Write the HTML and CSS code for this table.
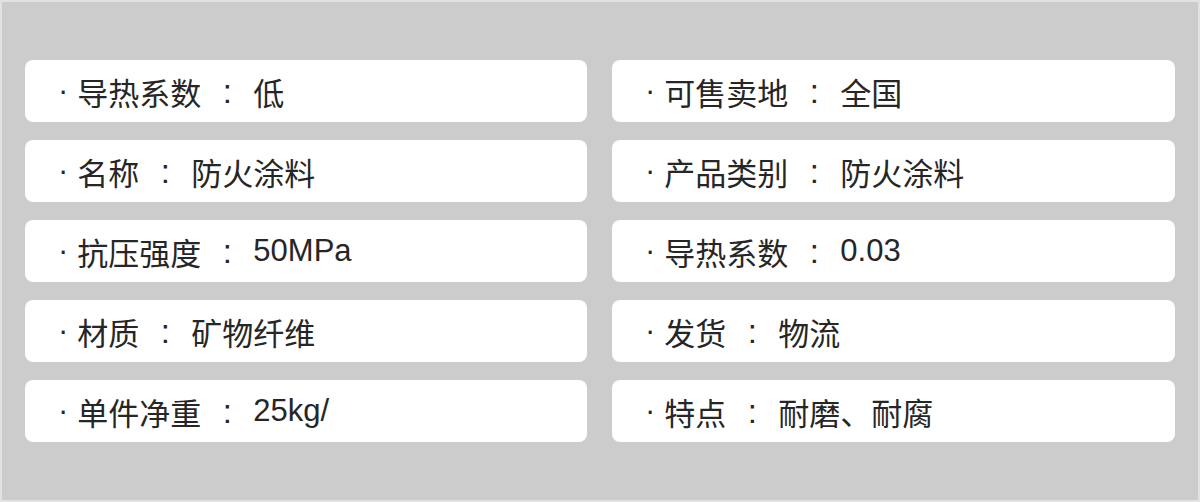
FILE: index.html
```html
<!DOCTYPE html>
<html lang="zh">
<head>
<meta charset="utf-8">
<title>参数</title>
<link rel="stylesheet" href="styles.css">
</head>
<body>
<div class="page">
  <div class="grid">
    <div class="card"><span class="dot">·</span><span class="label">导热系数</span><span class="colon">:</span><span class="value">低</span></div>
    <div class="card"><span class="dot">·</span><span class="label">可售卖地</span><span class="colon">:</span><span class="value">全国</span></div>
    <div class="card"><span class="dot">·</span><span class="label">名称</span><span class="colon">:</span><span class="value">防火涂料</span></div>
    <div class="card"><span class="dot">·</span><span class="label">产品类别</span><span class="colon">:</span><span class="value">防火涂料</span></div>
    <div class="card"><span class="dot">·</span><span class="label">抗压强度</span><span class="colon">:</span><span class="value">50MPa</span></div>
    <div class="card"><span class="dot">·</span><span class="label">导热系数</span><span class="colon">:</span><span class="value">0.03</span></div>
    <div class="card"><span class="dot">·</span><span class="label">材质</span><span class="colon">:</span><span class="value">矿物纤维</span></div>
    <div class="card"><span class="dot">·</span><span class="label">发货</span><span class="colon">:</span><span class="value">物流</span></div>
    <div class="card"><span class="dot">·</span><span class="label">单件净重</span><span class="colon">:</span><span class="value">25kg/</span></div>
    <div class="card"><span class="dot">·</span><span class="label">特点</span><span class="colon">:</span><span class="value">耐磨、耐腐</span></div>
  </div>
</div>
</body>
</html>
```
FILE: styles.css
```css
html, body {
  margin: 0;
  padding: 0;
}
body {
  width: 1200px;
  height: 502px;
  overflow: hidden;
  font-family: "Liberation Sans", "Noto Sans CJK SC", sans-serif;
}
.page {
  box-sizing: border-box;
  width: 1200px;
  height: 502px;
  background: #cccccc;
  border: 2px solid #e2e2e2;
  padding: 58px 23px;
}
.grid {
  display: grid;
  grid-template-columns: 562px 563px;
  column-gap: 25px;
  row-gap: 18px;
}
.card {
  background: #ffffff;
  border-radius: 8px;
  height: 62px;
  display: flex;
  align-items: center;
  padding-left: 33px;
  font-size: 31px;
  color: #262626;
  white-space: nowrap;
}
.dot {
  margin-right: 9px;
}
.colon {
  display: inline-block;
  width: 52px;
  text-align: center;
  font-size: 33px;
  line-height: 1;
}
```
